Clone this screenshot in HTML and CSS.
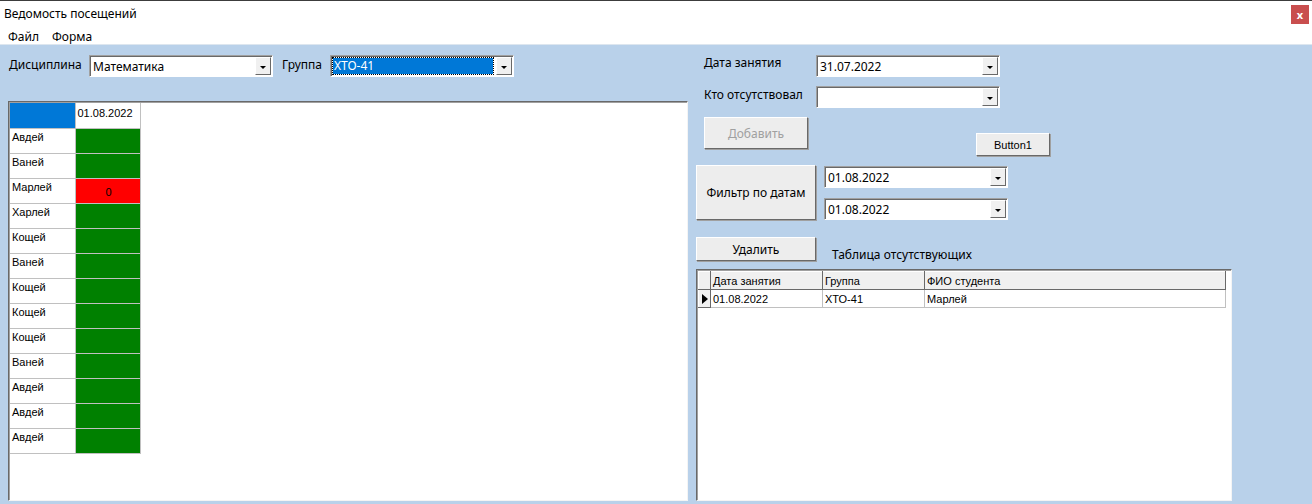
FILE: index.html
```html
<!DOCTYPE html>
<html lang="ru">
<head>
  <meta charset="UTF-8" />
  <title>Ведомость посещений</title>
  <link rel="stylesheet" href="styles.css">
</head>
<body>
  <div class="titlebar">
    <span class="title">Ведомость посещений</span>
    <span class="close">x</span>
  </div>
  <div class="menubar">
    <span>Файл</span>
    <span>Форма</span>
  </div>

  <div class="client">
    <!-- левая часть -->
    <div class="left">
      <div class="row top-row">
        <span class="label lbl-disc">Дисциплина</span>
        <div class="combo w184"><span class="val">Математика</span><span class="drop"></span></div>
        <span class="label lbl-group">Группа</span>
        <div class="combo w184 focused"><span class="val"><span class="sel">ХТО-41</span></span><span class="drop"></span></div>
      </div>

      <div class="panel journal">
        <table class="grid">
          <tr><td class="corner"></td><td class="date">01.08.2022</td></tr>
          <tr><td>Авдей</td><td class="ok"></td></tr>
          <tr><td>Ваней</td><td class="ok"></td></tr>
          <tr><td>Марлей</td><td class="miss">0</td></tr>
          <tr><td>Харлей</td><td class="ok"></td></tr>
          <tr><td>Кощей</td><td class="ok"></td></tr>
          <tr><td>Ваней</td><td class="ok"></td></tr>
          <tr><td>Кощей</td><td class="ok"></td></tr>
          <tr><td>Кощей</td><td class="ok"></td></tr>
          <tr><td>Кощей</td><td class="ok"></td></tr>
          <tr><td>Ваней</td><td class="ok"></td></tr>
          <tr><td>Авдей</td><td class="ok"></td></tr>
          <tr><td>Авдей</td><td class="ok"></td></tr>
          <tr><td>Авдей</td><td class="ok"></td></tr>
        </table>
      </div>
    </div>

    <!-- правая часть -->
    <div class="right">
      <div class="row r1">
        <span class="label rlabel">Дата занятия</span>
        <div class="combo w184"><span class="val">31.07.2022</span><span class="drop"></span></div>
      </div>
      <div class="row r2">
        <span class="label rlabel">Кто отсутствовал</span>
        <div class="combo w184"><span class="val"></span><span class="drop"></span></div>
      </div>
      <div class="row r3">
        <button class="btn btn-add" disabled>Добавить</button>
        <button class="btn btn-one">Button1</button>
      </div>
      <div class="row r4">
        <button class="btn btn-filter">Фильтр по датам</button>
        <div class="dates">
          <div class="combo w184"><span class="val">01.08.2022</span><span class="drop"></span></div>
          <div class="combo w184"><span class="val">01.08.2022</span><span class="drop"></span></div>
        </div>
      </div>
      <div class="row r5">
        <button class="btn btn-del">Удалить</button>
        <span class="label lbl-table">Таблица отсутствующих</span>
      </div>

      <div class="panel absent">
        <table class="grid2">
          <tr class="head"><th class="rh"></th><th class="c1">Дата занятия</th><th class="c2">Группа</th><th class="c3">ФИО студента</th></tr>
          <tr><td class="rh"><span class="arrow"></span></td><td>01.08.2022</td><td>ХТО-41</td><td>Марлей</td></tr>
        </table>
      </div>
    </div>
  </div>
</body>
</html>
```

FILE: styles.css
```css
body {
  margin: 0;
  width: 1312px;
  height: 504px;
  overflow: hidden;
  font-family: "Noto Sans", "DejaVu Sans", sans-serif;
  font-size: 12px;
  color: #000;
  background: #fff;
}
.titlebar {
  height: 27px;
  display: flex;
  align-items: center;
  justify-content: space-between;
  padding-left: 4px;
  border-top: 1px solid #3c3c3c;
}
.title {
  margin-top: -2px;
}
.close {
  width: 18px;
  height: 19px;
  margin-right: 3px;
  background: #c94e4e;
  color: #fff;
  font-size: 11px;
  font-weight: bold;
  display: flex;
  align-items: center;
  justify-content: center;
}
.menubar {
  height: 16px;
  display: flex;
  gap: 13px;
  padding-left: 8px;
  align-items: center;
}
.client {
  height: 459px;
  background: #b9d1ea;
  border-top: 1px solid #dde6ef;
  display: flex;
}
.row {
  display: flex;
}
.label {
  white-space: nowrap;
}

/* комбобоксы */
.combo {
  height: 20px;
  background: #fff;
  border: 1px solid;
  border-color: #a0a0a0 #fff #fff #a0a0a0;
  box-shadow: inset 1px 1px 0 #696969;
  display: flex;
  align-items: stretch;
  box-sizing: content-box;
}
.w184 {
  width: 182px;
}
.combo .val {
  flex: 1;
  padding: 3px 0 0 3px;
  font-size: 12px;
  line-height: 15px;
}
.combo .drop {
  width: 16px;
  margin: 1px;
  background: #f0f0f0;
  border: 1px solid;
  border-color: #fff #696969 #696969 #fff;
  box-sizing: border-box;
  position: relative;
}
.combo .drop::after {
  content: "";
  position: absolute;
  left: 4px;
  top: 8px;
  border-left: 3px solid transparent;
  border-right: 3px solid transparent;
  border-top: 3px solid #000;
}
.focused .val {
  padding: 2px;
}
.focused .sel {
  display: block;
  height: 16px;
  background: #0078d7;
  color: #fff;
  outline: 1px dotted #000;
  padding-left: 1px;
}

/* левая колонка */
.left {
  width: 680px;
  padding-left: 8px;
}
.top-row {
  margin-top: 10px;
  align-items: flex-start;
}
.lbl-disc {
  margin-top: 1px;
  width: 80px;
  padding-left: 1px;
}
.lbl-group {
  margin: 1px 0 0 9px;
  width: 48px;
}
.panel {
  background: #fff;
  border: 1px solid;
  border-color: #696969 #f4f4f4 #f4f4f4 #696969;
  box-shadow: inset 1px 1px 0 #a0a0a0;
  box-sizing: border-box;
}
.journal {
  margin-top: 24px;
  height: 400px;
}
.grid {
  border-collapse: collapse;
  font-family: "Liberation Sans", Arial, sans-serif;
  font-size: 11px;
  margin: 1px 0 0 1px;
}
.grid td {
  width: 65px;
  height: 25px;
  padding: 0 0 0 2px;
  border: 1px solid #c0c0c0;
  vertical-align: top;
  line-height: 17px;
  box-sizing: border-box;
}
.grid tr:first-child td {
  border-top: none;
}
.grid td:first-child {
  border-left: none;
}
.grid .corner {
  background: #0078d7;
}
.grid .date {
  padding-top: 2px;
}
.grid .ok {
  background: #008000;
}
.grid .miss {
  background: #ff0000;
  text-align: center;
  padding-top: 5px;
}

/* правая колонка */
.right {
  width: 540px;
  padding-left: 8px;
}
.r1 {
  margin-top: 10px;
  align-items: flex-start;
}
.rlabel {
  width: 120px;
  padding-left: 8px;
  box-sizing: border-box;
  margin-top: -1px;
}
.r2 {
  margin-top: 9px;
  align-items: flex-start;
}
.r2 .rlabel {
  margin-top: 0;
}
.r3 {
  margin-top: 9px;
  align-items: flex-start;
}
.btn {
  font-family: "Noto Sans", "DejaVu Sans", sans-serif;
  font-size: 12px;
  background: #ededed;
  border: 1px solid;
  border-color: #fff #696969 #696969 #fff;
  box-shadow: 1px 1px 0 #a0a0a0;
  padding: 0;
  color: #000;
}
.btn-add {
  margin-left: 8px;
  width: 104px;
  height: 32px;
  color: #a0a0a0;
}
.btn-one {
  margin: 16px 0 0 168px;
  width: 74px;
  height: 23px;
  font-family: "Liberation Sans", Arial, sans-serif;
  font-size: 11px;
}
.r4 {
  margin-top: 9px;
  align-items: flex-start;
}
.btn-filter {
  width: 120px;
  height: 55px;
}
.dates {
  margin: 1px 0 0 8px;
  display: flex;
  flex-direction: column;
  gap: 10px;
}
.r5 {
  margin-top: 17px;
  align-items: flex-end;
}
.btn-del {
  width: 120px;
  height: 24px;
}
.lbl-table {
  margin-left: 16px;
  margin-bottom: -2px;
}
.absent {
  margin-top: 8px;
  width: 536px;
  height: 232px;
}
.grid2 {
  border-collapse: collapse;
  font-family: "Liberation Sans", Arial, sans-serif;
  font-size: 11px;
  margin: 1px 0 0 1px;
}
.grid2 th,
.grid2 td {
  height: 18px;
  padding: 0 0 0 2px;
  text-align: left;
  font-weight: normal;
  border: 1px solid #c0c0c0;
  box-sizing: border-box;
  line-height: 16px;
  white-space: nowrap;
}
.grid2 th {
  background: #f0f0f0;
  border-color: #fff #696969 #696969 #fff;
}
.grid2 .rh {
  width: 12px;
  padding: 0;
  background: #f0f0f0;
  border-color: #fff #696969 #696969 #fff;
  position: relative;
}
.grid2 .c1 {
  width: 112px;
}
.grid2 .c2 {
  width: 102px;
}
.grid2 .c3 {
  width: 301px;
}
.arrow {
  position: absolute;
  left: 3px;
  top: 4px;
  border-top: 5px solid transparent;
  border-bottom: 5px solid transparent;
  border-left: 6px solid #000;
}
```
